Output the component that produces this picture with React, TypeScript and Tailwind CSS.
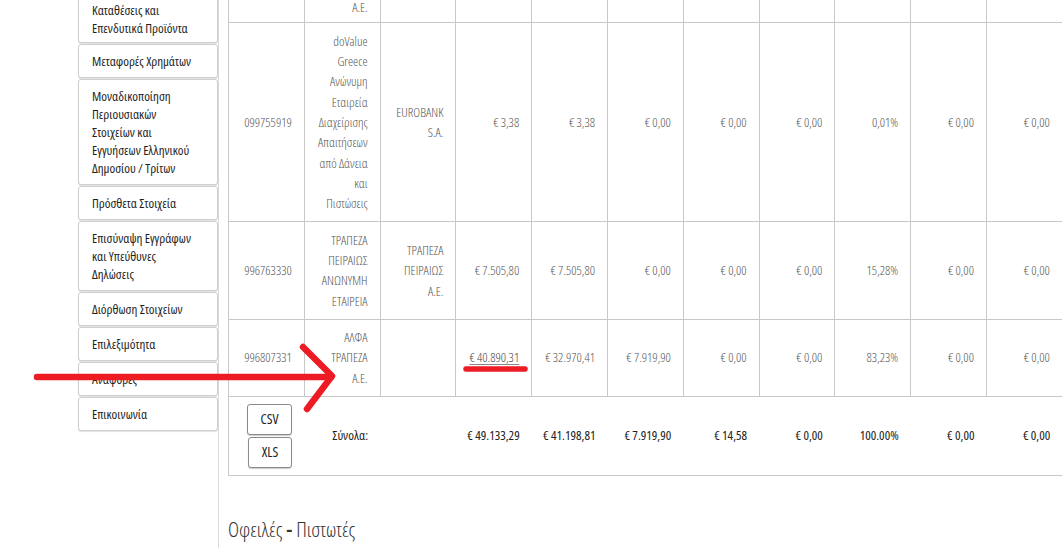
import React from 'react';

// Πλαϊνό μενού
const menuItems: string[][] = [
  ['Καταθέσεις και', 'Επενδυτικά Προϊόντα'],
  ['Μεταφορές Χρημάτων'],
  ['Μοναδικοποίηση', 'Περιουσιακών', 'Στοιχείων και', 'Εγγυήσεων Ελληνικού', 'Δημοσίου / Τρίτων'],
  ['Πρόσθετα Στοιχεία'],
  ['Επισύναψη Εγγράφων', 'και Υπεύθυνες', 'Δηλώσεις'],
  ['Διόρθωση Στοιχείων'],
  ['Επιλεξιμότητα'],
  ['Αναφορές'],
  ['Επικοινωνία'],
];

type Row = {
  afm: string;
  name: string[];
  bank: string[];
  values: string[];
  linkFirst?: boolean;
};

const rows: Row[] = [
  {
    afm: '099755919',
    name: ['doValue', 'Greece', 'Ανώνυμη', 'Εταιρεία', 'Διαχείρισης', 'Απαιτήσεων', 'από Δάνεια', 'και', 'Πιστώσεις'],
    bank: ['EUROBANK', 'S.A.'],
    values: ['€ 3,38', '€ 3,38', '€ 0,00', '€ 0,00', '€ 0,00', '0,01%', '€ 0,00', '€ 0,00'],
  },
  {
    afm: '996763330',
    name: ['ΤΡΑΠΕΖΑ', 'ΠΕΙΡΑΙΩΣ', 'ΑΝΩΝΥΜΗ', 'ΕΤΑΙΡΕΙΑ'],
    bank: ['ΤΡΑΠΕΖΑ', 'ΠΕΙΡΑΙΩΣ', 'Α.Ε.'],
    values: ['€ 7.505,80', '€ 7.505,80', '€ 0,00', '€ 0,00', '€ 0,00', '15,28%', '€ 0,00', '€ 0,00'],
  },
  {
    afm: '996807331',
    name: ['ΑΛΦΑ', 'ΤΡΑΠΕΖΑ', 'Α.Ε.'],
    bank: [],
    values: ['€ 40.890,31', '€ 32.970,41', '€ 7.919,90', '€ 0,00', '€ 0,00', '83,23%', '€ 0,00', '€ 0,00'],
    linkFirst: true,
  },
];

const totals = ['€ 49.133,29', '€ 41.198,81', '€ 7.919,90', '€ 14,58', '€ 0,00', '100.00%', '€ 0,00', '€ 0,00'];

const td = 'border border-[#c8c8c8] pr-[12px] pl-[4px] py-[7.5px] text-right align-middle';

function Lines({ lines }: { lines: string[] }) {
  return (
    <>
      {lines.map((l, i) => (
        <span key={i} className="block whitespace-nowrap">
          {l}
        </span>
      ))}
    </>
  );
}

export default function App() {
  return (
    <div
      className="relative w-[1062px] h-[548px] overflow-hidden bg-white flex"
      style={{ fontFamily: '"Open Sans", "DejaVu Sans", sans-serif', fontStretch: '75%' }}
    >
      {/* Sidebar */}
      <aside className="w-[219px] shrink-0 pl-[78px] border-r border-[#dcdcdc]">
        <div className="flex flex-col gap-[1px] -mt-[7px]">
          {menuItems.map((item, i) => (
            <div
              key={i}
              className={
                'border border-[#cfcfcf] rounded-[3px] bg-white pt-[7px] pl-[13px] pr-2 text-[13px] leading-[18px] text-[#1e1e1e] shadow-[0_1px_1px_rgba(0,0,0,0.12)] ' +
                (i === 0 ? 'pb-[5px]' : 'pb-[7px]')
              }
            >
              <Lines lines={item} />
            </div>
          ))}
        </div>
      </aside>

      {/* Content */}
      <main className="flex-1 min-w-0 pl-[9px]">
        <div className="-mt-[3px]">
          <table className="border-collapse table-fixed w-[910px] text-[13px] leading-[20.33px] font-light text-[#555]">
            <colgroup>
              {Array.from({ length: 12 }).map((_, i) => (
                <col key={i} className="w-[75.8px]" />
              ))}
            </colgroup>
            <tbody>
              <tr>
                {Array.from({ length: 12 }).map((_, i) => (
                  <td key={i} className="border border-[#c8c8c8] border-t-0 pr-[12px] pb-[5px] pt-0 text-right align-bottom">
                    {i === 1 ? 'Α.Ε.' : ''}
                  </td>
                ))}
              </tr>
              {rows.map((r) => (
                <tr key={r.afm}>
                  <td className={td}>{r.afm}</td>
                  <td className={td}>
                    <Lines lines={r.name} />
                  </td>
                  <td className={td}>
                    <Lines lines={r.bank} />
                  </td>
                  {r.values.map((v, i) => (
                    <td key={i} className={td}>
                      {i === 0 && r.linkFirst ? (
                        <a href="#" className="underline decoration-[#888] underline-offset-2 text-[#444]">
                          {v}
                        </a>
                      ) : (
                        v
                      )}
                    </td>
                  ))}
                  <td className={td}></td>
                </tr>
              ))}
              <tr className="text-[#222] font-normal">
                <td className="border-l border-b border-[#c8c8c8] py-[7px] pl-[18px]">
                  <div className="flex flex-col items-start gap-[2px] text-[14px]">
                    <button className="w-[45px] h-[31px] border border-[#8a8a8a] rounded-[3px] bg-white shadow-[0_1px_1px_rgba(0,0,0,0.2)]">
                      CSV
                    </button>
                    <button className="ml-[1px] w-[44px] h-[31px] border border-[#8a8a8a] rounded-[3px] bg-white shadow-[0_1px_1px_rgba(0,0,0,0.2)]">
                      XLS
                    </button>
                  </div>
                </td>
                <td className="border-b border-[#c8c8c8] pr-[12px] text-right align-middle">Σύνολα:</td>
                <td className="border-b border-[#c8c8c8]"></td>
                {totals.map((v, i) => (
                  <td key={i} className="border-b border-[#c8c8c8] pr-[12px] text-right align-middle">
                    {v}
                  </td>
                ))}
                <td className="border-b border-[#c8c8c8]"></td>
              </tr>
            </tbody>
          </table>
        </div>

        <h2 className="mt-[38px] text-[21px] leading-[30px] font-light text-[#333]">
          Οφειλές <span className="font-semibold">-</span> Πιστωτές
        </h2>
      </main>

      {/* Κόκκινη σημείωση */}
      <svg className="absolute inset-0 pointer-events-none" width="1062" height="548" viewBox="0 0 1062 548">
        <g fill="none" stroke="#ed1c24" strokeLinecap="round" strokeLinejoin="round">
          <path d="M37 377 L331 377" strokeWidth="6.5" />
          <path d="M303 347 L332 376 L307 409" strokeWidth="6.5" />
          <path d="M466 369 L525 369" strokeWidth="5.5" />
        </g>
      </svg>
    </div>
  );
}
